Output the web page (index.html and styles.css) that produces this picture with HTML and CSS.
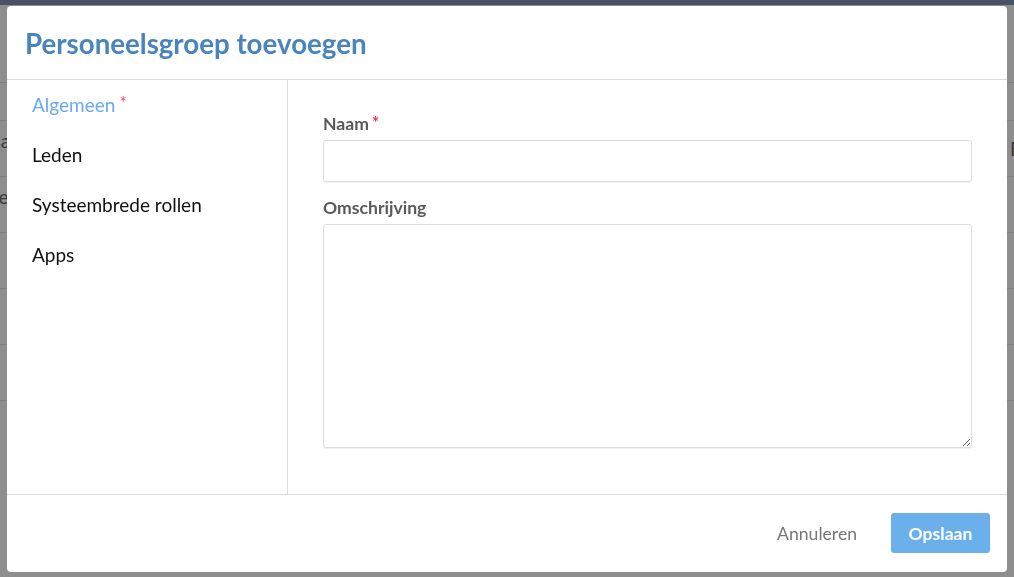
FILE: index.html
```html
<!DOCTYPE html>
<html lang="nl">
<head>
<meta charset="utf-8">
<title>Personeelsgroep toevoegen</title>
<link rel="stylesheet" href="styles.css">
</head>
<body>
<div class="page">
  <div class="topbar"></div>
  <div class="table">
    <div class="row row-head"></div>
    <div class="row row-small"></div>
    <div class="row"><span class="cell-l">Basa</span><span class="cell-r">Beg</span></div>
    <div class="row"><span class="cell-l">Mee</span></div>
    <div class="row"></div>
    <div class="row"></div>
    <div class="row"></div>
  </div>
</div>

<div class="backdrop">
  <div class="modal">
    <div class="modal-header">
      <h1 class="modal-title">Personeelsgroep toevoegen</h1>
    </div>
    <div class="modal-body">
      <nav class="sidebar">
        <a class="nav-item active">Algemeen<span class="req req-nav">*</span></a>
        <a class="nav-item">Leden</a>
        <a class="nav-item">Systeembrede rollen</a>
        <a class="nav-item">Apps</a>
      </nav>
      <div class="content">
        <div class="field">
          <label class="label">Naam<span class="req">*</span></label>
          <input class="input" type="text">
        </div>
        <div class="field">
          <label class="label">Omschrijving</label>
          <textarea class="textarea"></textarea>
        </div>
      </div>
    </div>
    <div class="modal-footer">
      <button class="btn btn-link">Annuleren</button>
      <button class="btn btn-primary">Opslaan</button>
    </div>
  </div>
</div>
</body>
</html>
```

FILE: styles.css
```css
* { box-sizing: border-box; }

html, body {
  margin: 0;
  padding: 0;
  width: 100%;
  height: 100%;
  overflow: hidden;
}

body {
  font-family: Lato, "Noto Sans", sans-serif;
  background: #8e8e8e;
}

.page {
  width: 100%;
  height: 100%;
  background: #8e8e8e;
  overflow: hidden;
}

.topbar {
  height: 5px;
  background: #475264;
}

.table {
  display: flex;
  flex-direction: column;
}

.row {
  height: 56px;
  border-bottom: 1px solid #7f7f7f;
  display: flex;
  justify-content: space-between;
  align-items: flex-start;
  font-size: 19px;
  color: #3a3a3a;
  padding-top: 8px;
}

.row-head { height: 78px; }
.row-small { height: 38px; }

.cell-l { margin-left: -29px; }
.cell-r { margin-right: -28px; margin-top: 8px; }

.backdrop {
  position: fixed;
  inset: 0;
  display: flex;
  align-items: center;
  justify-content: center;
  padding-top: 1px;
}

.modal {
  width: 1000px;
  height: 566px;
  background: #fff;
  border-radius: 4px;
  display: flex;
  flex-direction: column;
  overflow: hidden;
}

.modal-header {
  height: 74px;
  border-bottom: 1px solid #dcdcdc;
  display: flex;
  align-items: center;
  padding: 0 18px;
  flex: none;
}

.modal-title {
  margin: 0;
  font-size: 27.7px;
  font-weight: 700;
  color: #4a84bd;
  letter-spacing: 0;
  padding-top: 1px;
}

.modal-body {
  flex: 1;
  display: flex;
  border-bottom: 1px solid #dcdcdc;
}

.sidebar {
  width: 281px;
  border-right: 1px solid #dcdcdc;
  display: flex;
  flex-direction: column;
  padding-top: 13px;
  flex: none;
}

.nav-item {
  display: block;
  height: 50px;
  line-height: 24px;
  padding-left: 25px;
  font-size: 19px;
  color: #111;
  cursor: pointer;
}

.nav-item.active { color: #6aaaf0; }

.req {
  color: #f0344a;
  font-size: 17px;
  margin-left: 4px;
  vertical-align: top;
  position: relative;
  top: -3px;
}

.req-nav { color: #f2457a; top: -2px; }

.content {
  flex: 1;
  padding: 34px 35px 0 35px;
  display: flex;
  flex-direction: column;
  gap: 16px;
}

.field {
  display: flex;
  flex-direction: column;
  gap: 6px;
}

.label {
  font-size: 17.6px;
  font-weight: 700;
  color: #5a5a5a;
  line-height: 20px;
}

.label .req { top: -1px; font-size: 17px; margin-left: 3px; }

.input {
  height: 42px;
  border: 1px solid #dddddd;
  border-radius: 3px;
  box-shadow: 0 1px 1px rgba(0,0,0,0.06);
  font: inherit;
  outline: none;
}

.textarea {
  height: 224px;
  border: 1px solid #dddddd;
  border-radius: 3px;
  box-shadow: 0 1px 1px rgba(0,0,0,0.06);
  font: inherit;
  resize: vertical;
  outline: none;
}

.modal-footer {
  height: 77px;
  flex: none;
  display: flex;
  align-items: center;
  justify-content: flex-end;
  padding: 0 17px 1px 0;
  gap: 14px;
}

.btn {
  font-family: Lato, "Noto Sans", sans-serif;
  font-size: 17.6px;
  border: none;
  cursor: pointer;
  height: 40px;
  border-radius: 3px;
}

.btn-link {
  background: transparent;
  color: #777;
  padding: 0 20px;
}

.btn-primary {
  background: #6cb0eb;
  color: #fff;
  font-weight: 700;
  width: 99px;
}
```
